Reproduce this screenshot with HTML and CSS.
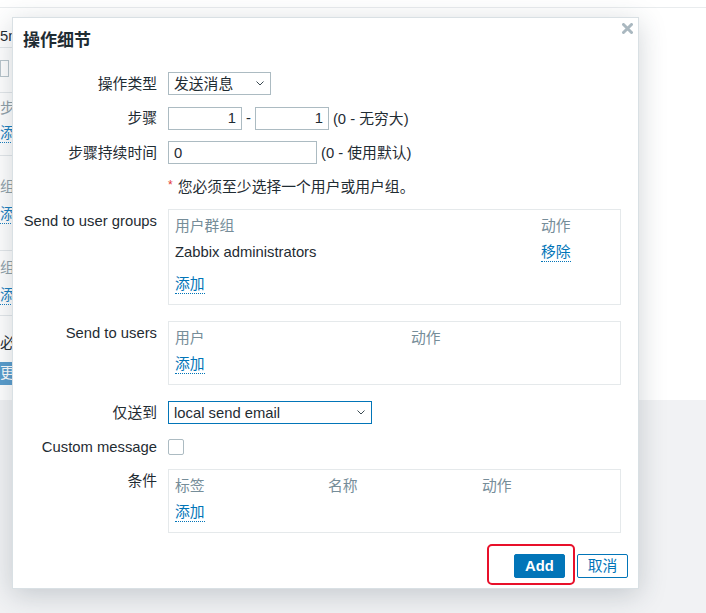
FILE: index.html
```html
<!DOCTYPE html>
<html lang="zh-CN">
<head>
<meta charset="utf-8">
<title>操作细节</title>
<link rel="stylesheet" href="styles.css">
</head>
<body>
<div class="page">
  <div class="page-top">
    <div class="page-inner">
      <div class="side">
        <div class="side-a"><span class="side-dark">5m</span></div>
        <div class="side-b"><span class="side-box"></span></div>
        <div class="side-c"><span class="side-gray">步</span><span class="side-link">添</span></div>
        <div class="side-d"><span class="side-gray">组</span><span class="side-link">添</span></div>
        <div class="side-e"><span class="side-gray">组</span><span class="side-link">添</span></div>
        <div class="side-f"><span class="side-dark">必</span><span class="side-btn">更</span></div>
      </div>
    </div>
  </div>
  <div class="page-bottom"></div>
</div>

<div class="dialog">
  <h2 class="dialog-title">操作细节</h2>
  <button class="dialog-close" type="button" aria-label="关闭">
    <svg width="11" height="11" viewBox="0 0 11 11"><path d="M1.5 1.5 L9.5 9.5 M9.5 1.5 L1.5 9.5" stroke="#aab8c0" stroke-width="3" stroke-linecap="round"/></svg>
  </button>

  <div class="form">
    <label class="form-label">操作类型</label>
    <div class="form-field">
      <div class="select select-type"><span>发送消息</span><svg class="chev" width="8" height="5" viewBox="0 0 8 5"><path d="M0.5 0.5 L4 4 L7.5 0.5" fill="none" stroke="#3b4a52" stroke-width="1"/></svg></div>
    </div>

    <label class="form-label">步骤</label>
    <div class="form-field">
      <input class="input input-step" value="1"><span class="dash">-</span><input class="input input-step" value="1"><span class="hint">(0 - 无穷大)</span>
    </div>

    <label class="form-label">步骤持续时间</label>
    <div class="form-field">
      <input class="input input-duration" value="0"><span class="hint">(0 - 使用默认)</span>
    </div>

    <div class="form-label"></div>
    <div class="form-field"><span class="required">*</span><span class="required-text">您必须至少选择一个用户或用户组。</span></div>

    <label class="form-label form-label-top">Send to user groups</label>
    <div class="form-field form-field-top">
      <div class="table-box box-groups">
        <div class="trow thead"><span class="cell">用户群组</span><span class="cell">动作</span></div>
        <div class="trow"><span class="cell">Zabbix administrators</span><span class="cell"><a class="link">移除</a></span></div>
        <div class="trow tadd tadd-gap"><span class="cell"><a class="link">添加</a></span></div>
      </div>
    </div>

    <label class="form-label form-label-top">Send to users</label>
    <div class="form-field form-field-top">
      <div class="table-box box-users">
        <div class="trow thead"><span class="cell">用户</span><span class="cell">动作</span></div>
        <div class="trow tadd"><span class="cell"><a class="link">添加</a></span></div>
      </div>
    </div>

    <label class="form-label">仅送到</label>
    <div class="form-field">
      <div class="select select-media"><span>local send email</span><svg class="chev" width="8" height="5" viewBox="0 0 8 5"><path d="M0.5 0.5 L4 4 L7.5 0.5" fill="none" stroke="#3b4a52" stroke-width="1"/></svg></div>
    </div>

    <label class="form-label">Custom message</label>
    <div class="form-field"><span class="checkbox"></span></div>

    <label class="form-label form-label-top">条件</label>
    <div class="form-field form-field-top">
      <div class="table-box box-conditions box-last">
        <div class="trow thead"><span class="cell">标签</span><span class="cell">名称</span><span class="cell">动作</span></div>
        <div class="trow tadd"><span class="cell"><a class="link">添加</a></span></div>
      </div>
    </div>
  </div>

  <div class="dialog-footer">
    <div class="btn-wrap">
      <button class="btn btn-primary" type="button">Add</button>
      <span class="highlight"></span>
    </div>
    <button class="btn btn-alt" type="button">取消</button>
  </div>
</div>
</body>
</html>
```

FILE: styles.css
```css
html, body {
  margin: 0;
  padding: 0;
}

body {
  width: 706px;
  height: 613px;
  overflow: hidden;
  position: relative;
  font-family: "Liberation Sans", "Noto Sans CJK SC", sans-serif;
  font-size: 14.8px;
  color: #1f2c33;
  background: #f1f2f4;
}

/* ---------- background page ---------- */
.page {
  display: flex;
  flex-direction: column;
  height: 613px;
}

.page-top {
  height: 400px;
  background: #fff;
  padding-top: 7px;
  box-sizing: border-box;
}

.page-inner {
  border-top: 1px solid #e9ecee;
}

.page-bottom {
  flex: 1;
  background: #f1f2f4;
}

.side {
  width: 40px;
  display: flex;
  flex-direction: column;
}

.side > div {
  box-sizing: border-box;
  border-bottom: 1px solid #e3e7ea;
  display: flex;
  flex-direction: column;
  align-items: flex-start;
}

.side span {
  display: block;
  line-height: 18px;
}

.side-dark { color: #1f2c33; }
.side-gray { color: #8fa0a8; }
.side-link {
  color: #1a7fc0;
  border-bottom: 1px dotted #1a7fc0;
}

.side-a { height: 40px; padding-top: 19px; }
.side-b { height: 45px; padding-top: 12px; }
.side-box {
  width: 9px;
  height: 17px;
  box-sizing: border-box;
  border: 1px solid #b9c6cc;
}
.side-c { height: 63px; padding-top: 6px; }
.side-c .side-link { margin-top: 7px; }
.side-d { height: 95px; padding-top: 22px; }
.side-d .side-link { margin-top: 9px; }
.side-e { height: 65px; padding-top: 8px; }
.side-e .side-link { margin-top: 9px; }
.side > .side-f { border-bottom: 0; padding-top: 18px; }
.side-f .side-btn {
  margin-top: 10px;
  width: 30px;
  height: 23px;
  line-height: 23px;
  background: #5a9dcd;
  color: #fff;
}

/* ---------- dialog ---------- */
.dialog {
  position: absolute;
  left: 12px;
  top: 17px;
  width: 627px;
  box-sizing: border-box;
  background: #fff;
  border: 1px solid #d9e0e4;
  box-shadow: 0 6px 26px rgba(40, 60, 75, 0.22);
  padding: 11px 10px 10px 10px;
}

.dialog-title {
  margin: 0;
  font-size: 17px;
  font-weight: bold;
  line-height: 24px;
  color: #1f2c33;
}

.dialog-close {
  position: absolute;
  top: 5px;
  right: 5px;
  width: 11px;
  height: 11px;
  padding: 0;
  border: 0;
  background: none;
  display: block;
}

.dialog-close svg {
  display: block;
}

.form {
  margin-top: 19px;
  display: grid;
  grid-template-columns: 134px 453px;
  column-gap: 11px;
  row-gap: 11px;
}

.form-label {
  text-align: right;
  line-height: 21px;
  padding-top: 2px;
  white-space: nowrap;
}

.form-field {
  display: flex;
  align-items: center;
  min-height: 23px;
  line-height: 23px;
}

.form-field-top {
  display: block;
}

/* controls */
.input {
  height: 23px;
  box-sizing: border-box;
  border: 1px solid #acbbc2;
  padding: 1px 5px 0 5px;
  margin: 0;
  font: inherit;
  color: #1f2c33;
  background: #fff;
  outline: none;
}

.input-step {
  width: 74px;
  text-align: right;
}

.input-duration {
  width: 149px;
}

.dash {
  margin: 0 4px 0 4px;
  padding-top: 1px;
}

.hint {
  margin-left: 4px;
  padding-top: 2px;
  line-height: 21px;
}

.select {
  height: 23px;
  box-sizing: border-box;
  border: 1px solid #acbbc2;
  padding: 1px 6px 0 5px;
  display: flex;
  align-items: center;
  justify-content: space-between;
  background: #fff;
}

.select-type { width: 103px; }
.select-media { width: 204px; border-color: #0275b8; }

.chev {
  display: block;
  margin-top: -2px;
}

.checkbox {
  display: block;
  width: 16px;
  height: 16px;
  box-sizing: border-box;
  border: 1px solid #acbbc2;
  border-radius: 2px;
}

.required {
  color: #e33734;
  font-size: 12px;
  margin-right: 5px;
  position: relative;
  top: -1px;
}

.required-text {
  padding-top: 2px;
  line-height: 21px;
}

/* tables */
.table-box {
  border: 1px solid #e5e9eb;
  padding: 3px 0 7px 0;
  margin-bottom: 5px;
}

.table-box.box-last {
  margin-bottom: 0;
}

.trow {
  display: grid;
  box-sizing: border-box;
  height: 26px;
  padding-top: 1px;
  line-height: 25px;
}

.cell {
  padding-left: 6px;
  white-space: nowrap;
}

.thead .cell {
  color: #768d99;
}

.box-groups .trow { grid-template-columns: 366px 1fr; }
.box-users .trow { grid-template-columns: 236px 1fr; }
.box-conditions .trow { grid-template-columns: 153px 154px 1fr; }

.tadd-gap {
  margin-top: 6px;
}

.link {
  color: #0275b8;
  border-bottom: 1px dotted #0275b8;
  padding-bottom: 1px;
  cursor: pointer;
}

/* footer */
.dialog-footer {
  margin-top: 21px;
  display: flex;
  justify-content: flex-end;
  gap: 12px;
}

.btn-wrap {
  position: relative;
}

.btn {
  height: 24px;
  width: 51px;
  box-sizing: border-box;
  font: inherit;
  border-radius: 2px;
  padding: 1px 0 0 0;
  display: block;
  line-height: 21px;
}

.btn-primary {
  background: #0275b8;
  border: 1px solid #0275b8;
  color: #fff;
  font-weight: bold;
}

.btn-alt {
  background: #fff;
  border: 1px solid #0275b8;
  color: #0275b8;
}

.highlight {
  position: absolute;
  left: -27px;
  top: -10px;
  width: 88px;
  height: 41px;
  box-sizing: border-box;
  border: 2.5px solid #e8102a;
  border-radius: 5px;
  pointer-events: none;
}
```
